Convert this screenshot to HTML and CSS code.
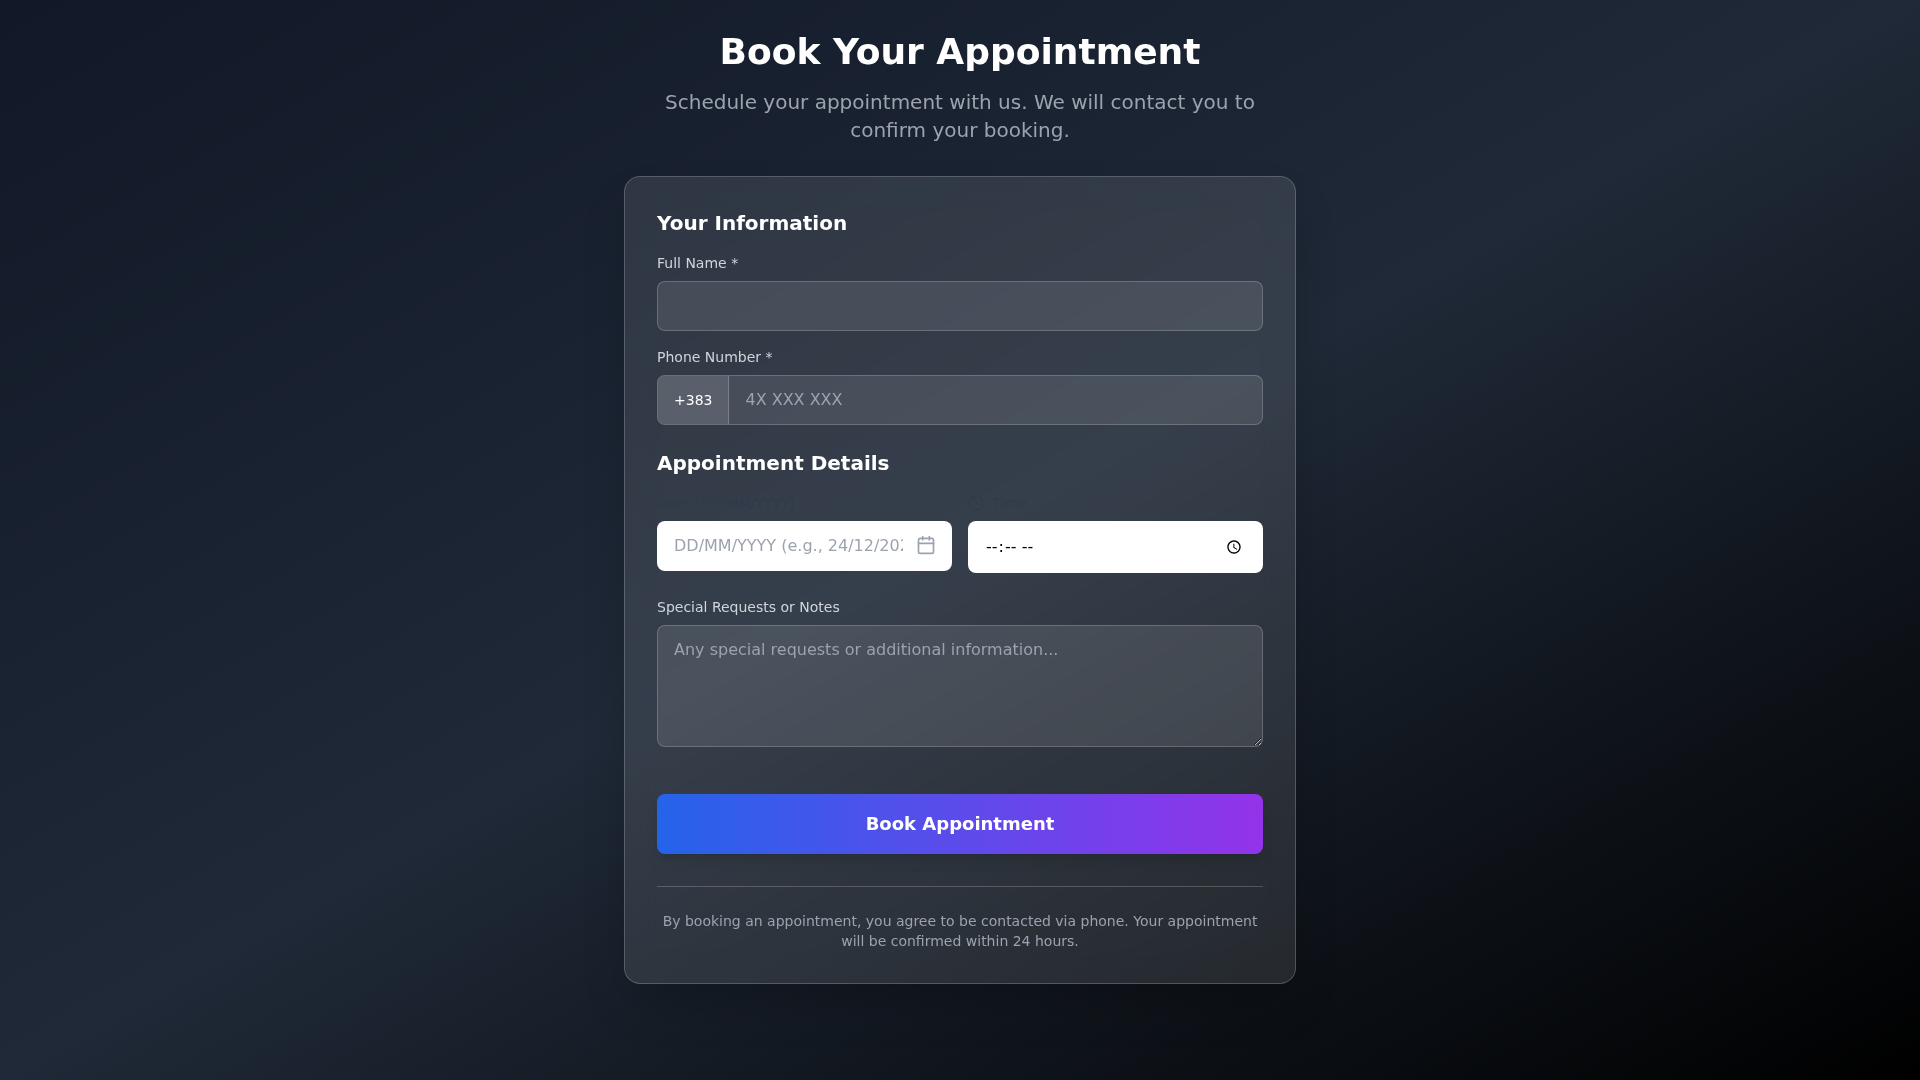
FILE: index.html
```html
<!DOCTYPE html>
<html lang="en">
  <head>
    <meta charset="UTF-8" />
    <meta name="viewport" content="width=device-width, initial-scale=1" />
    <title>Book Your Appointment</title>
    <link rel="stylesheet" href="styles.css">
  </head>
  <body>
    <main class="page">
      <header class="intro">
        <h1>Book Your Appointment</h1>
        <p>Schedule your appointment with us. We will contact you to confirm your booking.</p>
      </header>

      <form class="card">
        <!-- kontakt -->
        <h2>Your Information</h2>
        <div class="field">
          <label for="name">Full Name *</label>
          <input id="name" type="text" />
        </div>
        <div class="field">
          <label for="phone">Phone Number *</label>
          <div class="phone">
            <span class="prefix">+383</span>
            <input id="phone" type="tel" placeholder="4X XXX XXX" />
          </div>
        </div>

        <!-- termin -->
        <h2 class="second">Appointment Details</h2>
        <div class="date-row">
          <div class="date-col">
            <label class="dark" for="date">Date (DD/MM/YYYY)</label>
            <div class="date-wrap">
              <input id="date" type="text" placeholder="DD/MM/YYYY (e.g., 24/12/2024)" />
              <svg class="cal" viewBox="0 0 24 24" fill="none" stroke="currentColor" stroke-width="2" stroke-linecap="round" stroke-linejoin="round">
                <path d="M8 2v4" />
                <path d="M16 2v4" />
                <rect x="3" y="4" width="18" height="18" rx="2" />
                <path d="M3 10h18" />
              </svg>
            </div>
          </div>
          <div class="date-col">
            <label class="dark" for="time">
              <svg class="mini" viewBox="0 0 24 24" fill="none" stroke="currentColor" stroke-width="2" stroke-linecap="round" stroke-linejoin="round">
                <circle cx="12" cy="12" r="10" />
                <path d="M12 6v6l4 2" />
              </svg>
              Time
            </label>
            <input id="time" type="time" />
          </div>
        </div>
        <div class="field notes">
          <label for="notes">Special Requests or Notes</label>
          <textarea id="notes" rows="4" placeholder="Any special requests or additional information..."></textarea>
        </div>

        <button class="submit" type="button">Book Appointment</button>

        <p class="terms">By booking an appointment, you agree to be contacted via phone. Your appointment will be confirmed within 24 hours.</p>
      </form>
    </main>
  </body>
</html>
```

FILE: styles.css
```css
* {
  box-sizing: border-box;
}
html {
  font-size: 16px;
}
body {
  margin: 0;
  min-height: 100vh;
  font-family: "DejaVu Sans", sans-serif;
  background: linear-gradient(to bottom right, #111827, #1f2937, #000000);
  color: #fff;
}
.page {
  width: 672px;
  margin: 0 auto;
  padding: 32px 0;
  transform: translateZ(0);
}
.intro {
  text-align: center;
  margin-bottom: 32px;
}
.intro h1 {
  margin: 0 0 16px;
  font-size: 36px;
  line-height: 40px;
  font-weight: 700;
}
.intro p {
  width: 620px;
  margin: 0 auto;
  font-size: 20px;
  line-height: 28px;
  color: #9ca3af;
}
.card {
  padding: 32px;
  background: rgba(255, 255, 255, 0.1);
  border: 1px solid rgba(255, 255, 255, 0.2);
  border-radius: 16px;
  box-shadow: 0 25px 50px -12px rgba(0, 0, 0, 0.25);
  backdrop-filter: blur(16px);
}
h2 {
  margin: 0 0 16px;
  font-size: 20px;
  line-height: 28px;
  font-weight: 700;
}
h2.second {
  margin-top: 24px;
}
label {
  display: block;
  margin-bottom: 8px;
  font-size: 14px;
  line-height: 20px;
  color: #d1d5db;
}
label.dark {
  color: #313b4a;
}
.field {
  margin-bottom: 16px;
}
input,
textarea {
  display: block;
  width: 100%;
  padding: 12px 16px;
  font-family: inherit;
  font-size: 16px;
  line-height: 24px;
  color: #fff;
  background: rgba(255, 255, 255, 0.1);
  border: 1px solid rgba(255, 255, 255, 0.2);
  border-radius: 8px;
  outline: none;
}
input::placeholder,
textarea::placeholder {
  color: #9ca3af;
}
.phone {
  display: flex;
  background: rgba(255, 255, 255, 0.1);
  border: 1px solid rgba(255, 255, 255, 0.2);
  border-radius: 8px;
  overflow: hidden;
}
.phone .prefix {
  display: flex;
  align-items: center;
  padding: 0 16px;
  font-size: 14px;
  background: rgba(255, 255, 255, 0.1);
  border-right: 1px solid rgba(255, 255, 255, 0.2);
}
.phone input {
  flex: 1;
  padding-top: 11px;
  padding-bottom: 13px;
  background: none;
  border: 0;
  border-radius: 0;
  height: 48px;
}
.date-row {
  display: grid;
  grid-template-columns: 1fr 1fr;
  gap: 16px;
  margin-bottom: 24px;
}
.date-wrap {
  position: relative;
}
.date-row input {
  background: #fff;
  color: #000;
}
#date {
  padding-right: 48px;
}
.cal {
  position: absolute;
  top: 14px;
  right: 16px;
  width: 20px;
  height: 20px;
  color: #9ca3af;
}
.mini {
  width: 16px;
  height: 16px;
  vertical-align: -3px;
  margin-right: 4px;
}
.notes {
  margin-bottom: 47px;
}
textarea {
  height: 122px;
  resize: vertical;
}
.submit {
  display: block;
  width: 100%;
  height: 60px;
  padding: 16px;
  font-family: inherit;
  font-size: 18px;
  line-height: 28px;
  font-weight: 700;
  color: #fff;
  background: linear-gradient(to right, #2563eb, #9333ea);
  border: 0;
  border-radius: 8px;
  box-shadow: 0 10px 15px -3px rgba(0, 0, 0, 0.1), 0 4px 6px -4px rgba(0, 0, 0, 0.1);
}
.terms {
  margin: 32px 0 0;
  padding-top: 24px;
  border-top: 1px solid rgba(255, 255, 255, 0.2);
  text-align: center;
  font-size: 14px;
  line-height: 20px;
  color: #9ca3af;
}
```
